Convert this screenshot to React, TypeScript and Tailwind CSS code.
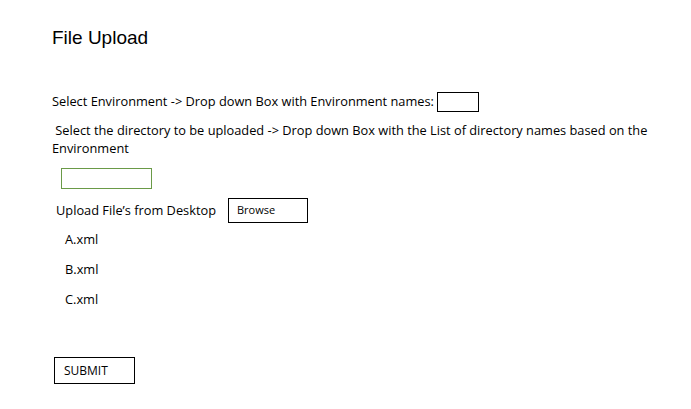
export default function App() {
  const files = ["A.xml", "B.xml", "C.xml"]

  return (
    <div className="w-[691px] h-[409px] bg-white text-[12.8px] text-black font-['Open_Sans','Noto_Sans',sans-serif] overflow-hidden">
      <div className="pl-[52px] pt-[26px]">
        <h1 className="text-[19px] leading-[24px] font-['Liberation_Sans',Arial,sans-serif]">File Upload</h1>

        <div className="mt-[42px] flex items-center h-[20px]">
          <span>Select Environment -&gt; Drop down Box with Environment names:</span>
          <div className="ml-[3px] w-[42px] h-[20px] border border-black" />
        </div>

        <p className="mt-[9px] leading-[18px] pr-[30px]">
          &nbsp;Select the directory to be uploaded -&gt; Drop down Box with the List of directory names based on the Environment
        </p>

        <div className="mt-[11px] ml-[9px] w-[91px] h-[21px] border border-[#6a9a48]" />

        <div className="mt-[9px] ml-[4px] flex items-center h-[25px]">
          <span>Upload File’s from Desktop</span>
          <div className="ml-[12px] w-[80px] h-[25px] border border-black flex items-center pl-[8px] text-[11px]">Browse</div>
        </div>

        <ul className="ml-[13px] mt-[1px]">
          {files.map((f) => (
            <li key={f} className="h-[30px] leading-[30px]">{f}</li>
          ))}
        </ul>

        <button className="mt-[43px] ml-[2px] w-[81px] h-[27px] border border-black text-left pl-[9px] text-[12px]">SUBMIT</button>
      </div>
    </div>
  )
}
